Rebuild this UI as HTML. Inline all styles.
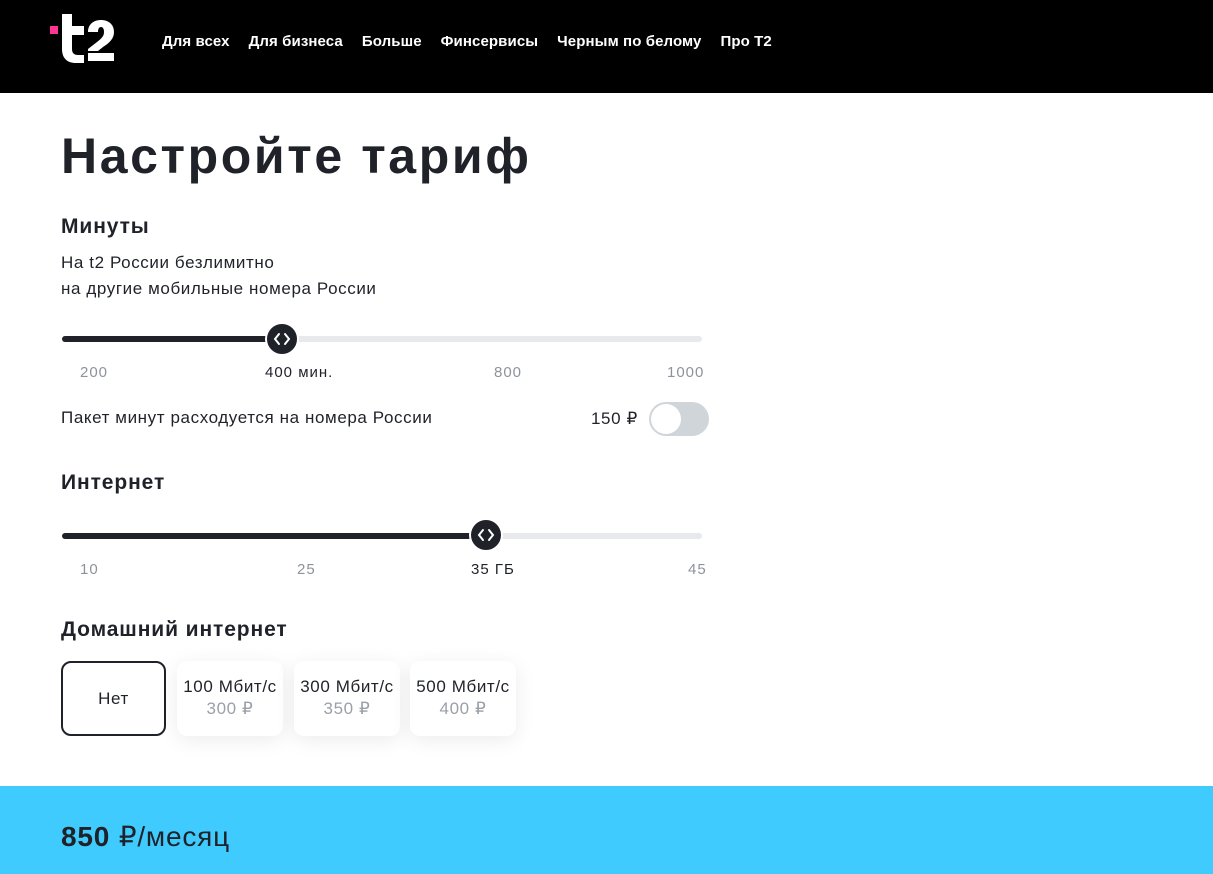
<!DOCTYPE html>
<html><head><meta charset="utf-8"><style>
*{margin:0;padding:0;box-sizing:border-box}
body{width:1213px;height:874px;overflow:hidden;background:#fff;font-family:"Liberation Sans",sans-serif;color:#1f2229;position:relative}
.hdr{position:absolute;left:0;top:0;width:1213px;height:93px;background:#000}
.nav{position:absolute;top:33px;left:162px;display:flex;gap:19px;color:#fff;font-size:15px;font-weight:bold;letter-spacing:0.1px}
.abs{position:absolute;white-space:nowrap}
h1{position:absolute;left:61px;top:127px;font-size:50px;font-weight:900;letter-spacing:2.6px}
.h2{font-size:21px;font-weight:bold;letter-spacing:0.9px}
.t{font-size:17px;letter-spacing:0.6px}
.track{position:absolute;height:6px;background:#e8e9ed;border-radius:3px}
.fill{position:absolute;height:6px;background:#1f2229;border-radius:3px}
.thumb{position:absolute;width:34px;height:34px;border-radius:50%;background:#1f2229;border:2px solid #fff}
.lbl{position:absolute;font-size:15px;color:#8e939b;letter-spacing:1px}
.lbl.a{color:#1f2229}
.card{position:absolute;top:661px;width:106px;height:75px;border-radius:10px;background:#fff;box-shadow:0 4px 20px rgba(0,0,0,.08);text-align:center;font-size:17px;letter-spacing:0.6px;line-height:22px}
.card .p{color:#9aa0a8}
.foot{position:absolute;left:0;top:786px;width:1213px;height:88px;background:#40cbff}
</style></head><body>
<div class="hdr">
<svg style="position:absolute;left:48px;top:12px" width="70" height="52" viewBox="0 0 70 52">
<rect x="2" y="14" width="8" height="8" fill="#ff3495"/>
<path d="M14 2h10v12h12v9H24v14c0 4 2 6 6 6h6v8h-8c-9 0-14-5-14-14z" fill="#fff"/>
<path d="M40 20c0-8 6-12 13-12s13 4 13 12c0 7-5 11-11 15l-5 4h-10v-2l9-7c5-4 7-6 7-10 0-3-1-5-3-5s-3 2-3 5z" fill="#fff"/>
<rect x="40" y="41" width="26" height="8" fill="#fff"/>
</svg>
<div class="nav"><span>Для всех</span><span>Для бизнеса</span><span>Больше</span><span>Финсервисы</span><span>Черным по белому</span><span>Про Т2</span></div>
</div>
<h1>Настройте тариф</h1>
<div class="abs h2" style="left:61px;top:215px">Минуты</div>
<div class="abs t" style="left:61px;top:253px">На t2 России безлимитно</div>
<div class="abs t" style="left:61px;top:279px">на другие мобильные номера России</div>
<div class="track" style="left:62px;top:336px;width:640px"></div>
<div class="fill" style="left:62px;top:336px;width:222px"></div>
<div class="thumb" style="left:265px;top:322px"><svg width="30" height="30" viewBox="0 0 30 30"><path d="M12 10l-4 5 4 5M18 10l4 5-4 5" stroke="#fff" stroke-width="2" fill="none" stroke-linecap="round"/></svg></div>
<div class="lbl" style="left:80px;top:364px">200</div>
<div class="lbl a" style="left:265px;top:364px">400 мин.</div>
<div class="lbl" style="left:494px;top:364px">800</div>
<div class="lbl" style="left:667px;top:364px">1000</div>
<div class="abs t" style="left:61px;top:408px">Пакет минут расходуется на номера России</div>
<div class="abs t" style="left:591px;top:409px">150 ₽</div>
<div class="abs" style="left:649px;top:402px;width:60px;height:34px;border-radius:17px;background:#d0d5da"><div style="position:absolute;left:2px;top:2px;width:30px;height:30px;border-radius:50%;background:#fff"></div></div>
<div class="abs h2" style="left:61px;top:471px">Интернет</div>
<div class="track" style="left:62px;top:533px;width:640px"></div>
<div class="fill" style="left:62px;top:533px;width:425px"></div>
<div class="thumb" style="left:469px;top:518px"><svg width="30" height="30" viewBox="0 0 30 30"><path d="M12 10l-4 5 4 5M18 10l4 5-4 5" stroke="#fff" stroke-width="2" fill="none" stroke-linecap="round"/></svg></div>
<div class="lbl" style="left:80px;top:561px">10</div>
<div class="lbl" style="left:297px;top:561px">25</div>
<div class="lbl a" style="left:471px;top:561px">35 ГБ</div>
<div class="lbl" style="left:688px;top:561px">45</div>
<div class="abs h2" style="left:61px;top:618px">Домашний интернет</div>
<div class="card" style="left:61px;width:105px;border:2px solid #1f2229;box-shadow:none;line-height:71px">Нет</div>
<div class="card" style="left:177px;padding-top:15px">100 Мбит/с<div class="p">300 ₽</div></div>
<div class="card" style="left:294px;padding-top:15px">300 Мбит/с<div class="p">350 ₽</div></div>
<div class="card" style="left:410px;padding-top:15px">500 Мбит/с<div class="p">400 ₽</div></div>
<div class="foot"><div class="abs" style="left:61px;top:34px;font-size:28px;letter-spacing:0.8px"><b>850</b> ₽/месяц</div></div>
</body></html>
